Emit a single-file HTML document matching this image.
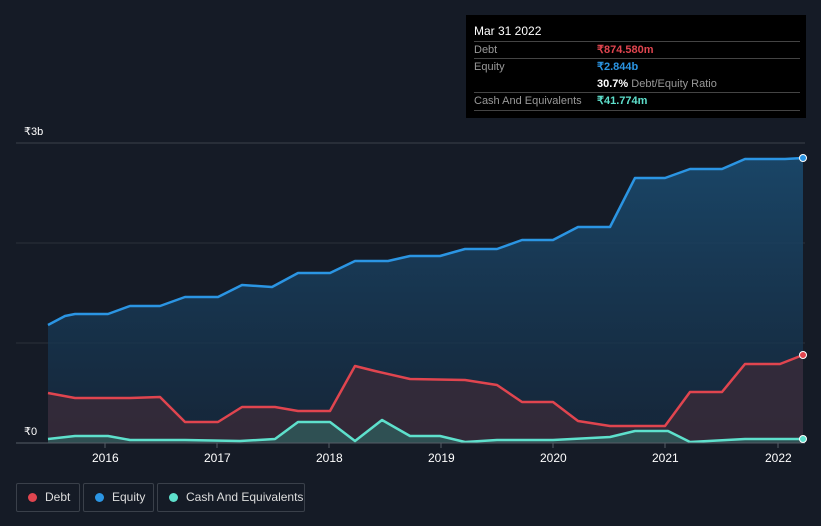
<!DOCTYPE html><html><head><style>
body{margin:0;background:#151b26;width:821px;height:526px;overflow:hidden;font-family:"Liberation Sans",sans-serif;position:relative}
.t{position:absolute;color:#fff;font-size:12px}
.tip{position:absolute;left:466px;top:15px;width:340px;height:103px;background:#000}
.row{position:absolute;left:8px;width:326px;font-size:11px;color:#999;border-top:1px solid #444}
.lg{position:absolute;top:483px;height:27px;border:1px solid #3a404a;border-radius:2px;color:#ddd;font-size:12px;line-height:27px}
.lg i{display:inline-block;width:9px;height:9px;border-radius:50%;margin:0 8px 0 11px;vertical-align:-1px}
</style></head><body>
<svg width="821" height="526" style="position:absolute;left:0;top:0">
<defs>
<linearGradient id="ge" x1="0" y1="0" x2="0" y2="1"><stop offset="0" stop-color="#1a4a6e" stop-opacity=".9"/><stop offset="1" stop-color="#152a40" stop-opacity=".7"/></linearGradient>
</defs>
<line x1="16" y1="143" x2="805" y2="143" stroke="#3a404a"/>
<line x1="16" y1="243" x2="805" y2="243" stroke="#2a303a"/>
<line x1="16" y1="343" x2="805" y2="343" stroke="#2a303a"/>
<path d="M48,325 L65,316 75,314 108,314 130,306 160,306 185,297 218,297 242,285 272,287 298,273 330,273 355,261 388,261 410,256 440,256 465,249 497,249 522,240 553,240 578,227 610,227 635,178 665,178 690,169 722,169 745,159 785,159 803,158 L803,443 48,443Z" fill="url(#ge)"/>
<path d="M48,393 L75,398 130,398 160,397 185,422 218,422 242,407 275,407 298,411 330,411 355,366 375,371 410,379 465,380 497,385 522,402 553,402 578,421 610,426 665,426 690,392 722,392 745,364 780,364 803,355 L803,443 48,443Z" fill="#3a2a38" fill-opacity=".8"/>
<path d="M48,439 L75,436 108,436 130,440 185,440 240,441 275,439 298,422 330,422 355,441 382,420 410,436 440,436 465,442 497,440 553,440 610,437 635,431 668,431 690,442 745,439 803,439 L803,443 48,443Z" fill="#2e5a5a" fill-opacity=".8"/>
<path d="M48,325 L65,316 75,314 108,314 130,306 160,306 185,297 218,297 242,285 272,287 298,273 330,273 355,261 388,261 410,256 440,256 465,249 497,249 522,240 553,240 578,227 610,227 635,178 665,178 690,169 722,169 745,159 785,159 803,158" fill="none" stroke="#2b95e3" stroke-width="2.5" stroke-linejoin="round"/>
<path d="M48,393 L75,398 130,398 160,397 185,422 218,422 242,407 275,407 298,411 330,411 355,366 375,371 410,379 465,380 497,385 522,402 553,402 578,421 610,426 665,426 690,392 722,392 745,364 780,364 803,355" fill="none" stroke="#e0454f" stroke-width="2.5" stroke-linejoin="round"/>
<path d="M48,439 L75,436 108,436 130,440 185,440 240,441 275,439 298,422 330,422 355,441 382,420 410,436 440,436 465,442 497,440 553,440 610,437 635,431 668,431 690,442 745,439 803,439" fill="none" stroke="#5ee0cc" stroke-width="2.5" stroke-linejoin="round"/>
<line x1="16" y1="443" x2="805" y2="443" stroke="#555c66"/>
<g stroke="#555c66"><line x1="105" y1="443" x2="105" y2="448"/><line x1="217" y1="443" x2="217" y2="448"/><line x1="329" y1="443" x2="329" y2="448"/><line x1="441" y1="443" x2="441" y2="448"/><line x1="553" y1="443" x2="553" y2="448"/><line x1="665" y1="443" x2="665" y2="448"/><line x1="778" y1="443" x2="778" y2="448"/></g>
<circle cx="803" cy="158" r="3.5" fill="#2b95e3" stroke="#fff" stroke-width="1"/>
<circle cx="803" cy="355" r="3.5" fill="#e0454f" stroke="#fff" stroke-width="1"/>
<circle cx="803" cy="439" r="3.5" fill="#5ee0cc" stroke="#fff" stroke-width="1"/>
</svg>
<div class="t" style="left:24px;top:125px;font-size:11px">₹3b</div>
<div class="t" style="left:24px;top:425px;font-size:11px">₹0</div>
<div class="t" style="left:92px;top:451px">2016</div>
<div class="t" style="left:204px;top:451px">2017</div>
<div class="t" style="left:316px;top:451px">2018</div>
<div class="t" style="left:428px;top:451px">2019</div>
<div class="t" style="left:540px;top:451px">2020</div>
<div class="t" style="left:652px;top:451px">2021</div>
<div class="t" style="left:765px;top:451px">2022</div>
<div class="tip">
<div style="position:absolute;left:8px;top:9px;color:#fff;font-size:12px">Mar 31 2022</div>
<div class="row" style="top:26px;height:17px;line-height:17px">Debt<span style="position:absolute;left:123px;color:#e0454f;font-weight:bold">₹874.580m</span></div>
<div class="row" style="top:43px;height:34px;line-height:17px">Equity<span style="position:absolute;left:123px;color:#2b95e3;font-weight:bold">₹2.844b</span><br><span style="position:absolute;left:123px;top:17px"><b style="color:#fff">30.7%</b> Debt/Equity Ratio</span></div>
<div class="row" style="top:77px;height:17px;line-height:17px;border-bottom:1px solid #444">Cash And Equivalents<span style="position:absolute;left:123px;color:#5ee0cc;font-weight:bold">₹41.774m</span></div>
</div>
<div class="lg" style="left:16px;width:62px"><i style="background:#e0454f"></i>Debt</div>
<div class="lg" style="left:83px;width:69px"><i style="background:#2b95e3"></i>Equity</div>
<div class="lg" style="left:157px;width:146px"><i style="background:#5ee0cc"></i>Cash And Equivalents</div>
</body></html>
